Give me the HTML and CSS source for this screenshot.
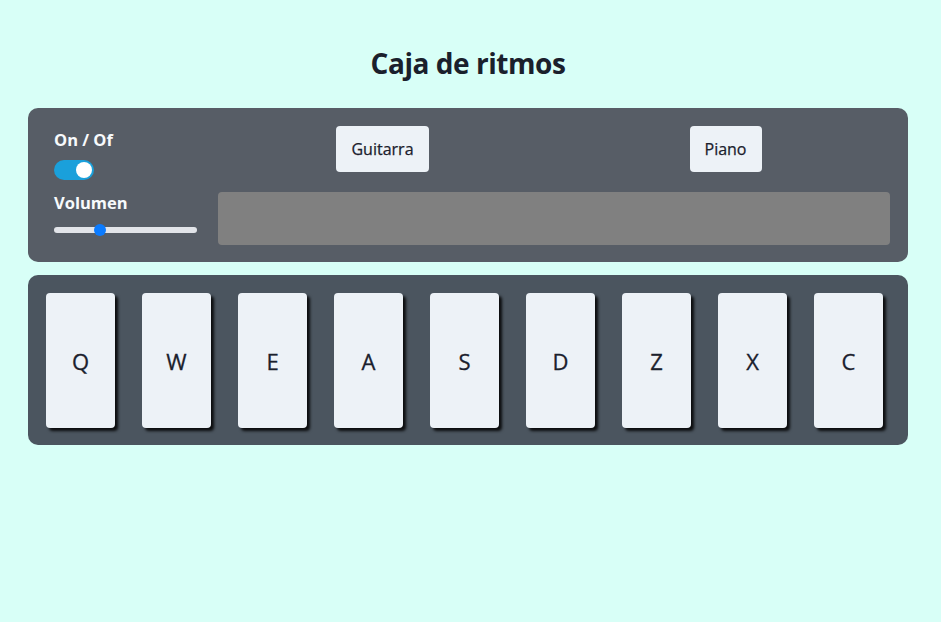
FILE: index.html
```html
<!DOCTYPE html>
<html lang="es">
<head>
<meta charset="utf-8">
<title>Caja de ritmos</title>
<link rel="stylesheet" href="styles.css">
</head>
<body>
<main class="app">
  <h1 class="title">Caja de ritmos</h1>
  <section class="controls">
    <div class="left">
      <div class="label">On / Of</div>
      <div class="toggle"><span class="knob"></span></div>
      <div class="label vol">Volumen</div>
      <div class="slider"><span class="thumb"></span></div>
    </div>
    <div class="right">
      <div class="banks">
        <div class="bank"><button class="btn">Guitarra</button></div>
        <div class="bank"><button class="btn">Piano</button></div>
      </div>
      <div class="display"></div>
    </div>
  </section>
  <section class="pads">
    <div class="pad">Q</div>
    <div class="pad">W</div>
    <div class="pad">E</div>
    <div class="pad">A</div>
    <div class="pad">S</div>
    <div class="pad">D</div>
    <div class="pad">Z</div>
    <div class="pad">X</div>
    <div class="pad">C</div>
  </section>
</main>
</body>
</html>
```

FILE: styles.css
```css
html, body {
  margin: 0;
  padding: 0;
}
body {
  background: #d8fff7;
  font-family: "Open Sans", "Noto Sans", sans-serif;
  color: #1a202c;
}
.app {
  width: 880px;
  margin-left: 28px;
}
.title {
  margin: 0 0 25px;
  padding-top: 43px;
  font-size: 28px;
  line-height: 40px;
  font-weight: 700;
  text-align: center;
  letter-spacing: -0.45px;
}
.controls {
  background: #575d66;
  border-radius: 10px;
  display: flex;
  padding: 18px 11px 17px 26px;
  gap: 14px;
  height: 154px;
  box-sizing: border-box;
}
.left {
  width: 143px;
  display: flex;
  flex-direction: column;
  padding-top: 2px;
}
.label {
  color: #f7fafc;
  font-weight: 700;
  font-size: 16.5px;
  line-height: 24px;
}
.toggle {
  margin-top: 8px;
  width: 40px;
  height: 20px;
  border-radius: 10px;
  background: #1aa0db;
  position: relative;
}
.knob {
  position: absolute;
  right: 2px;
  top: 2px;
  width: 16px;
  height: 16px;
  border-radius: 50%;
  background: #fff;
}
.vol {
  margin-top: 11px;
}
.slider {
  margin-top: 12px;
  height: 6px;
  border-radius: 3px;
  background: #e2e4e9;
  position: relative;
}
.thumb {
  position: absolute;
  left: 40px;
  top: -3px;
  width: 12px;
  height: 12px;
  border-radius: 50%;
  background: #0b7bff;
}
.right {
  flex: 1;
  display: flex;
  flex-direction: column;
}
.banks {
  display: grid;
  grid-template-columns: 1fr 1fr;
  height: 46px;
}
.bank {
  display: flex;
  justify-content: center;
}
.btn {
  font-family: inherit;
  font-size: 16px;
  color: #1a202c;
  -webkit-text-stroke: 0.25px #1a202c;
  background: #edf2f7;
  border: none;
  border-radius: 4px;
  padding: 0 15px;
  height: 46px;
}
.display {
  margin: 20px 7px 0;
  height: 53px;
  background: #808080;
  border-radius: 4px;
}
.pads {
  margin-top: 13px;
  background: #4b555f;
  border-radius: 10px;
  height: 170px;
  box-sizing: border-box;
  padding: 18px 0 0 18px;
  display: flex;
  gap: 27px;
}
.pad {
  width: 69px;
  height: 135px;
  background: #edf2f7;
  border-radius: 4px;
  box-shadow: 3px 3px 3px rgba(0, 0, 0, 0.85);
  display: flex;
  align-items: center;
  justify-content: center;
  font-size: 22px;
  -webkit-text-stroke: 0.3px #1a202c;
  color: #1a202c;
}
```
